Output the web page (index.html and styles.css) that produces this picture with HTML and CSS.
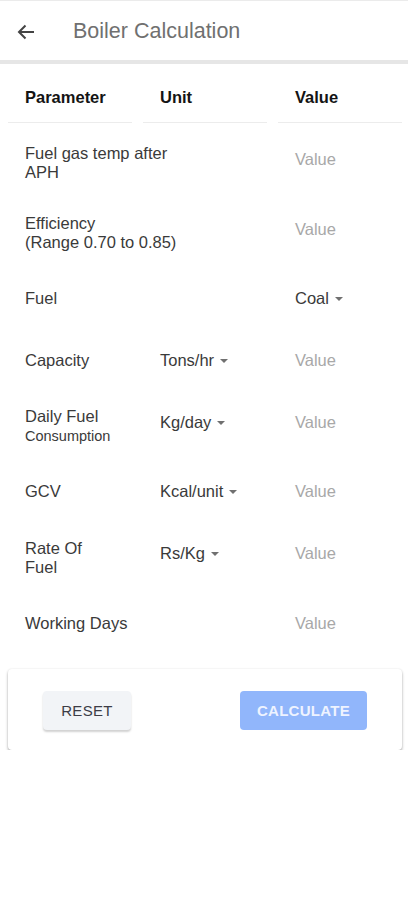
FILE: index.html
```html
<!DOCTYPE html>
<html lang="en">
<head>
<meta charset="utf-8">
<title>Boiler Calculation</title>
<link rel="stylesheet" href="styles.css">
</head>
<body>
<header class="appbar">
  <button class="back" aria-label="Back">
    <svg width="18" height="16" viewBox="0 0 18 16"><path d="M17 8H2M8.5 1.5L2 8l6.5 6.5" fill="none" stroke="#444" stroke-width="2"/></svg>
  </button>
  <h1 class="title">Boiler Calculation</h1>
</header>

<main class="content">
  <div class="table">
    <div class="head-row">
      <div class="th">Parameter</div>
      <div class="th">Unit</div>
      <div class="th">Value</div>
    </div>

    <div class="row tall">
      <div class="param">Fuel gas temp after<br>APH</div>
      <div class="unit"></div>
      <div class="value">Value</div>
    </div>
    <div class="row tall">
      <div class="param">Efficiency<br>(Range 0.70 to 0.85)</div>
      <div class="unit"></div>
      <div class="value">Value</div>
    </div>
    <div class="row">
      <div class="param">Fuel</div>
      <div class="unit"></div>
      <div class="value select">Coal <span class="caret"></span></div>
    </div>
    <div class="row">
      <div class="param">Capacity</div>
      <div class="unit select">Tons/hr <span class="caret"></span></div>
      <div class="value">Value</div>
    </div>
    <div class="row tall">
      <div class="param">Daily Fuel<br><span class="small">Consumption</span></div>
      <div class="unit select">Kg/day <span class="caret"></span></div>
      <div class="value">Value</div>
    </div>
    <div class="row">
      <div class="param">GCV</div>
      <div class="unit select">Kcal/unit <span class="caret"></span></div>
      <div class="value">Value</div>
    </div>
    <div class="row tall">
      <div class="param">Rate Of<br>Fuel</div>
      <div class="unit select">Rs/Kg <span class="caret"></span></div>
      <div class="value">Value</div>
    </div>
    <div class="row">
      <div class="param">Working Days</div>
      <div class="unit"></div>
      <div class="value">Value</div>
    </div>
  </div>

  <div class="card">
    <button class="btn reset">RESET</button>
    <button class="btn calc">CALCULATE</button>
  </div>
</main>
</body>
</html>
```

FILE: styles.css
```css
* { box-sizing: border-box; }

html, body {
  margin: 0;
  padding: 0;
  background: #fff;
  font-family: "Liberation Sans", Arial, sans-serif;
}

.appbar {
  height: 64px;
  display: flex;
  align-items: center;
  border-top: 1px solid #ebebeb;
  border-bottom: 4px solid #e6e6e6;
  padding-left: 17px;
  padding-top: 2px;
}

.back {
  border: 0;
  background: none;
  padding: 0;
  width: 18px;
  height: 16px;
  display: flex;
}

.title {
  margin: 0 0 0 38px;
  font-size: 21.5px;
  font-weight: normal;
  color: #707070;
}

.content {
  padding: 0 6px 0 8px;
}

.head-row,
.row {
  display: grid;
  grid-template-columns: minmax(0, 1fr) minmax(0, 1fr) minmax(0, 1fr);
  column-gap: 11px;
}

.head-row {
  height: 59px;
}

.th {
  font-weight: bold;
  font-size: 16.5px;
  color: #141414;
  padding: 24px 17px 0;
  border-bottom: 1px solid #ececec;
}

.table {
  padding-bottom: 15px;
}

.row {
  height: 61.5px;
  align-items: center;
  font-size: 16.5px;
  color: #3a3a3a;
}

.row.tall { height: 70px; }

.head-row + .row { margin-top: 5px; }

.param,
.unit,
.value {
  padding-left: 17px;
  line-height: 19px;
  white-space: nowrap;
}

.small { font-size: 14.5px; }

.value { color: #a8a8a8; }

.row.tall .value,
.row.tall .unit { padding-bottom: 8px; }

.select {
  color: #3a3a3a;
  display: flex;
  align-items: center;
  gap: 6px;
}

.caret {
  width: 0;
  height: 0;
  border-left: 4.5px solid transparent;
  border-right: 4.5px solid transparent;
  border-top: 4.5px solid #707070;
  margin-top: 1px;
}

.card {
  display: flex;
  justify-content: space-between;
  align-items: center;
  height: 81px;
  padding: 1px 35px 0;
  border-radius: 4px;
  box-shadow: 0 2px 3px rgba(0,0,0,0.3), 0 0 2px rgba(0,0,0,0.1);
}

.btn {
  height: 39px;
  border: 0;
  border-radius: 4px;
  font-family: "Liberation Sans", Arial, sans-serif;
  font-size: 15px;
  letter-spacing: 0.3px;
}

.reset {
  width: 88px;
  background: #f2f4f7;
  color: #3c3c46;
  box-shadow: 0 2px 2px rgba(0,0,0,0.18);
}

.calc {
  width: 127px;
  background: #91b6fb;
  color: #eef3ff;
  font-weight: bold;
}
```
